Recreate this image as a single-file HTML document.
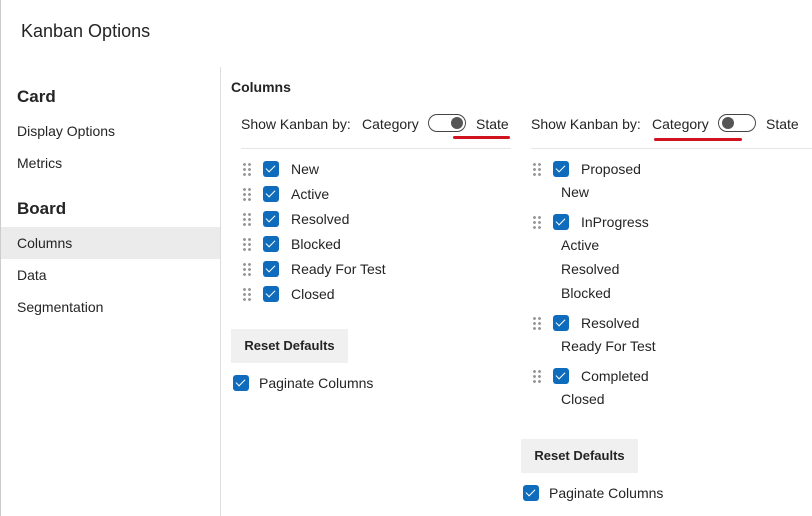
<!DOCTYPE html><html><head><style>
body{margin:0;width:812px;height:516px;background:#fff;font-family:"Liberation Sans",sans-serif;color:#242424;position:relative;overflow:hidden;font-size:14px}
.a{position:absolute;white-space:nowrap}
.cb{position:absolute;width:16px;height:16px;background:#0f6cbd;border-radius:3px}
.cb:after{content:"";position:absolute;left:5px;top:2px;width:4px;height:8px;border:solid #fff;border-width:0 1.6px 1.6px 0;transform:rotate(45deg)}
.dr{position:absolute;width:10px;height:14px;background:radial-gradient(circle,#999 1.3px,transparent 1.6px) 0 0/5px 5px}
.tg{position:absolute;width:38px;height:18px;border:1px solid #444;border-radius:10px;box-sizing:border-box}
.tg:after{content:"";position:absolute;width:12px;height:12px;border-radius:50%;background:#555;top:2px}
.t1:after{left:22px}.t2:after{left:3px}
.btn{position:absolute;background:#f0f0f0;font-weight:bold;font-size:13px;text-align:center;line-height:34px}
</style></head><body>
<div style="position:absolute;left:0;top:0;width:1px;height:516px;background:#ccc"></div>
<div class="a" style="left:21px;top:21px;font-size:18px">Kanban Options</div>
<div style="position:absolute;left:220px;top:67px;width:1px;height:449px;background:#ddd"></div>
<div class="a" style="left:17px;top:87px;font-size:17px;font-weight:bold">Card</div>
<div class="a" style="left:17px;top:123px">Display Options</div>
<div class="a" style="left:17px;top:155px">Metrics</div>
<div class="a" style="left:17px;top:199px;font-size:17px;font-weight:bold">Board</div>
<div style="position:absolute;left:1px;top:227px;width:219px;height:32px;background:#ebebeb"></div>
<div class="a" style="left:17px;top:235px">Columns</div>
<div class="a" style="left:17px;top:267px">Data</div>
<div class="a" style="left:17px;top:299px">Segmentation</div>
<div class="a" style="left:231px;top:79px;font-weight:bold">Columns</div>

<div class="a" style="left:241px;top:116px">Show Kanban by:</div>
<div class="a" style="left:362px;top:116px">Category</div>
<div class="tg t1" style="left:428px;top:114px"></div>
<div class="a" style="left:476px;top:116px">State</div>
<div style="position:absolute;left:453px;top:136px;width:57px;height:3px;background:#d1121f;border-radius:2px"></div>
<div style="position:absolute;left:241px;top:148px;width:270px;height:1px;background:#e6e6e6"></div>

<div class="a" style="left:531px;top:116px">Show Kanban by:</div>
<div class="a" style="left:652px;top:116px">Category</div>
<div class="tg t2" style="left:718px;top:114px"></div>
<div class="a" style="left:766px;top:116px">State</div>
<div style="position:absolute;left:654px;top:138px;width:88px;height:3px;background:#d1121f;border-radius:2px"></div>
<div style="position:absolute;left:531px;top:148px;width:281px;height:1px;background:#e6e6e6"></div>

<div class="dr" style="left:242px;top:162px"></div><div class="cb" style="left:263px;top:161px"></div><div class="a" style="left:291px;top:161px">New</div>
<div class="dr" style="left:242px;top:187px"></div><div class="cb" style="left:263px;top:186px"></div><div class="a" style="left:291px;top:186px">Active</div>
<div class="dr" style="left:242px;top:212px"></div><div class="cb" style="left:263px;top:211px"></div><div class="a" style="left:291px;top:211px">Resolved</div>
<div class="dr" style="left:242px;top:237px"></div><div class="cb" style="left:263px;top:236px"></div><div class="a" style="left:291px;top:236px">Blocked</div>
<div class="dr" style="left:242px;top:262px"></div><div class="cb" style="left:263px;top:261px"></div><div class="a" style="left:291px;top:261px">Ready For Test</div>
<div class="dr" style="left:242px;top:287px"></div><div class="cb" style="left:263px;top:286px"></div><div class="a" style="left:291px;top:286px">Closed</div>
<div class="btn" style="left:231px;top:329px;width:117px">Reset Defaults</div>
<div class="cb" style="left:233px;top:375px"></div><div class="a" style="left:259px;top:375px">Paginate Columns</div>

<div class="dr" style="left:532px;top:162px"></div><div class="cb" style="left:553px;top:161px"></div><div class="a" style="left:581px;top:161px">Proposed</div>
<div class="a" style="left:561px;top:184px">New</div>
<div class="dr" style="left:532px;top:215px"></div><div class="cb" style="left:553px;top:214px"></div><div class="a" style="left:581px;top:214px">InProgress</div>
<div class="a" style="left:561px;top:237px">Active</div>
<div class="a" style="left:561px;top:261px">Resolved</div>
<div class="a" style="left:561px;top:285px">Blocked</div>
<div class="dr" style="left:532px;top:316px"></div><div class="cb" style="left:553px;top:315px"></div><div class="a" style="left:581px;top:315px">Resolved</div>
<div class="a" style="left:561px;top:338px">Ready For Test</div>
<div class="dr" style="left:532px;top:369px"></div><div class="cb" style="left:553px;top:368px"></div><div class="a" style="left:581px;top:368px">Completed</div>
<div class="a" style="left:561px;top:391px">Closed</div>
<div class="btn" style="left:521px;top:439px;width:117px">Reset Defaults</div>
<div class="cb" style="left:523px;top:485px"></div><div class="a" style="left:549px;top:485px">Paginate Columns</div>
</body></html>
